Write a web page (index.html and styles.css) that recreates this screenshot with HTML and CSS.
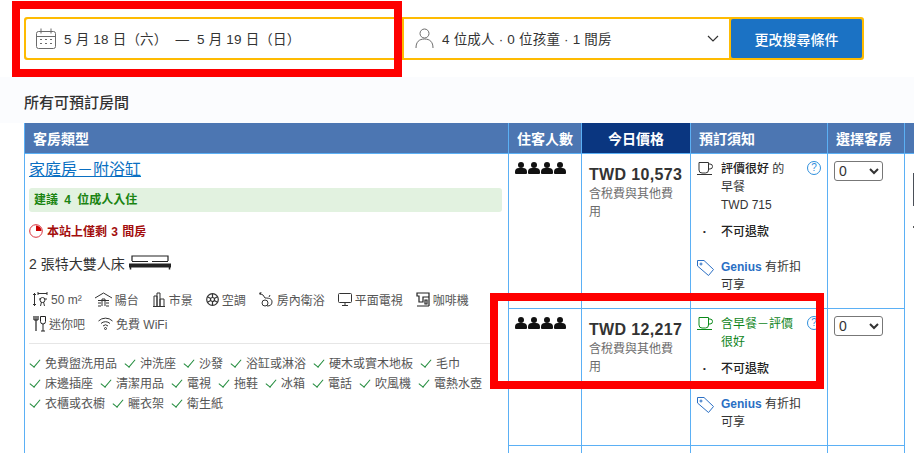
FILE: index.html
```html
<!DOCTYPE html>
<html lang="zh-Hant">
<head>
    <meta charset="UTF-8">
    <title>所有可預訂房間</title>
    <link rel="stylesheet" href="styles.css">
</head>
<body>
    <div class="search-bar">
        <div class="search-field date-field">
            <svg class="field-icon" width="20" height="21" viewBox="0 0 20 21" fill="none" stroke="#6b6b6b"><rect x="0.5" y="3.5" width="19" height="17" rx="2"/><path d="M0.5 8.5h19M5 0.5v5M15 0.5v5"/><path d="M4 11.5h2M9 11.5h2M14 11.5h2M4 15.5h2M9 15.5h2M14 15.5h2" stroke-dasharray="2 1"/></svg>
            <span>5 月 18 日（六）&nbsp;&nbsp;—&nbsp;&nbsp;5 月 19 日（日）</span>
        </div>
        <div class="search-field guest-field">
            <svg class="field-icon" width="19" height="21" viewBox="0 0 19 21" fill="none" stroke="#6b6b6b"><circle cx="9.5" cy="5.5" r="4.5"/><path d="M1 20c0-6 3-9 8.5-9s8.5 3 8.5 9"/></svg>
            <span>4 位成人 · 0 位孩童 · 1 間房</span>
            <svg class="chevron" width="12" height="7" viewBox="0 0 12 7" fill="none" stroke="#333" stroke-width="1.2"><path d="M1 1l5 5 5-5"/></svg>
        </div>
        <button class="search-btn">更改搜尋條件</button>
    </div>

    <div class="rooms">
        <h2 class="rooms-title">所有可預訂房間</h2>
        <table class="room-table">
            <colgroup>
                <col class="col-room"><col class="col-guests"><col class="col-price"><col class="col-policy"><col class="col-select"><col class="col-rest">
            </colgroup>
            <thead>
                <tr>
                    <th>客房類型</th>
                    <th>住客人數</th>
                    <th class="th-price">今日價格</th>
                    <th>預訂須知</th>
                    <th>選擇客房</th>
                    <th></th>
                </tr>
            </thead>
            <tbody>
                <tr class="row-first">
                    <td rowspan="3" class="room-cell">
                        <a class="room-name" href="#">家庭房－附浴缸</a>
                        <div class="suggest">建議 4 位成人入住</div>
                        <div class="scarce">
                            <svg width="14" height="14" viewBox="0 0 14 14"><circle cx="7" cy="7" r="6.3" fill="none" stroke="#d9333f" stroke-width="1"/><path d="M7 7V1.5A5.5 5.5 0 0 1 12.5 7z" fill="#c00"/></svg>
                            本站上僅剩 3 間房
                        </div>
                        <div class="bed">
                            2 張特大雙人床
                            <svg width="42" height="15" viewBox="0 0 42 15" fill="none" stroke="#222"><path d="M3 6V1h36v5" stroke-width="1.2"/><path d="M3 6.500h16M23 6.500h16" stroke-width="1.2"/><rect x="0.5" y="9" width="41" height="3" fill="#222"/><path d="M1.5 12v2.5M40.5 12v2.5" stroke-width="1.5"/></svg>
                        </div>
                        <div class="facilities">
                            <span class="facility"><svg width="15" height="15" viewBox="0 0 15 15" fill="none" stroke="#333"><path d="M1.5 1v13M0 2.5h3M0 12.5h3M5 1.5h9M5 0v3M14 0v3"/><circle cx="9.5" cy="8" r="2.5"/><path d="M7.5 14l1-4M11.5 14l-1-4M6 7h2M11 7h3"/></svg>50 m²</span>
                            <span class="facility"><svg width="17" height="15" viewBox="0 0 17 15" fill="none" stroke="#333"><path d="M0 6l8.5-5L17 6M3 8.5h11M3 11h3M11 11h3M3 14h3M11 14h3M7 14V7h3v7"/></svg>陽台</span>
                            <span class="facility"><svg width="14" height="15" viewBox="0 0 14 15" fill="none" stroke="#333"><path d="M1 14.5h12M2 14V4h3v10M5 14V1h3v13M8 14V7h4v7"/></svg>市景</span>
                            <span class="facility"><svg width="13" height="13" viewBox="0 0 13 13" fill="none" stroke="#333" stroke-width="1.2"><circle cx="6.5" cy="6.5" r="5.8"/><path d="M6.5 1v11M1.5 3.8l10 5.4M1.5 9.2l10-5.400"/><circle cx="6.5" cy="6.5" r="2" fill="#fff"/></svg>空調</span>
                            <span class="facility"><svg width="15" height="15" viewBox="0 0 15 15" fill="none" stroke="#333"><path d="M0 1l4 2M2 0l-1 3M4 3l2 3"/><circle cx="6" cy="11" r="3"/><path d="M6 6c5 0 7 1 7 4s-2 4-5 4M10 5l1-2"/></svg>房內衛浴</span>
                            <span class="facility"><svg width="14" height="13" viewBox="0 0 14 13" fill="none" stroke="#333"><rect x="0.5" y="0.5" width="13" height="9" rx="1"/><path d="M7 10v2.5M4 12.5h6"/></svg>平面電視</span>
                            <span class="facility"><svg width="14" height="15" viewBox="0 0 14 15" fill="none" stroke="#222"><path d="M1 1h12v4H7v5H3V4H1zM1 14h12M13 5v9M9 8h2v4H9z" stroke-width="1.2"/></svg>咖啡機</span>
                            <span class="facility"><svg width="13" height="16" viewBox="0 0 13 16" fill="none" stroke="#222"><path d="M1 0v4M3 0v15M5 0v4M1 4h4" stroke-width="1.2"/><path d="M7.5 0.5h5v5a2.5 2.5 0 0 1-5 0zM10 8v7M8 15h4"/></svg>迷你吧</span>
                            <span class="facility"><svg width="15" height="13" viewBox="0 0 15 13" fill="none" stroke="#333"><path d="M0.5 4a10 10 0 0 1 14 0M3 6.5a6.500 6.500 0 0 1 9 0M5 9a3.500 3.500 0 0 1 5 0"/><circle cx="7.5" cy="11.5" r="1"/></svg>免費 WiFi</span>
                        </div>
                        <ul class="amenities">
                            <li>免費盥洗用品</li><li>沖洗座</li><li>沙發</li><li>浴缸或淋浴</li><li>硬木或實木地板</li><li>毛巾</li>
                            <li>床邊插座</li><li>清潔用品</li><li>電視</li><li>拖鞋</li><li>冰箱</li><li>電話</li><li>吹風機</li><li>電熱水壺</li>
                            <li>衣櫃或衣櫥</li><li>曬衣架</li><li>衛生紙</li>
                        </ul>
                    </td>
                    <td class="guests-cell"><div class="people"><i></i><i></i><i></i><i></i></div></td>
                    <td class="price-cell">
                        <div class="price">TWD 10,573</div>
                        <div class="price-note">含稅費與其他費用</div>
                    </td>
                    <td class="policy-cell">
                        <div class="policy">
                            <svg class="policy-icon" width="16" height="13" viewBox="0 0 16 13" fill="none" stroke="#333"><path d="M2 0.5h9.5V8a3 3 0 0 1-3 3H5a3 3 0 0 1-3-3zM11.5 2H13a2 2 0 0 1 0 5h-1.5M0 12.5h15"/></svg>
                            <div class="policy-text"><b class="medium">評價很好</b> 的<br>早餐<br>TWD 715</div>
                            <span class="help">?</span>
                        </div>
                        <div class="policy no-refund"><span class="dot">•</span><div class="policy-text medium">不可退款</div></div>
                        <div class="policy genius">
                            <svg class="policy-icon" width="17" height="16" viewBox="0 0 17 16" fill="none" stroke="#2b6fc4"><path d="M0.5 0.5h6.5l9.5 9-5 6-11-9.5z"/><circle cx="4" cy="4" r="1"/></svg>
                            <div class="policy-text"><b class="genius-word">Genius</b> 有折扣<br>可享</div>
                        </div>
                    </td>
                    <td class="select-cell"><select class="room-select"><option>0</option></select></td>
                    <td class="rest-cell" rowspan="3"><div class="rest-box"></div><div class="rest-dot"></div></td>
                </tr>
                <tr class="row-second">
                    <td class="guests-cell"><div class="people"><i></i><i></i><i></i><i></i></div></td>
                    <td class="price-cell">
                        <div class="price">TWD 12,217</div>
                        <div class="price-note">含稅費與其他費用</div>
                    </td>
                    <td class="policy-cell">
                        <div class="policy">
                            <svg class="policy-icon" width="16" height="13" viewBox="0 0 16 13" fill="none" stroke="#0b8a1a"><path d="M2 0.5h9.5V8a3 3 0 0 1-3 3H5a3 3 0 0 1-3-3zM11.5 2H13a2 2 0 0 1 0 5h-1.5M0 12.5h15"/></svg>
                            <div class="policy-text green">含早餐－評價很好</div>
                            <span class="help">?</span>
                        </div>
                        <div class="policy no-refund"><span class="dot">•</span><div class="policy-text medium">不可退款</div></div>
                        <div class="policy genius">
                            <svg class="policy-icon" width="17" height="16" viewBox="0 0 17 16" fill="none" stroke="#2b6fc4"><path d="M0.5 0.5h6.5l9.5 9-5 6-11-9.5z"/><circle cx="4" cy="4" r="1"/></svg>
                            <div class="policy-text"><b class="genius-word">Genius</b> 有折扣<br>可享</div>
                        </div>
                    </td>
                    <td class="select-cell"><select class="room-select"><option>0</option></select></td>
                </tr>
                <tr class="row-third">
                    <td></td>
                    <td></td>
                    <td class="policy-cell"><div class="policy"><span class="help"></span></div></td>
                    <td class="select-cell"><select class="room-select"><option></option></select></td>
                </tr>
            </tbody>
        </table>
    </div>

    <!-- 紅框標註 -->
    <div class="mark mark-date"></div>
    <div class="mark mark-offer"></div>
</body>
</html>
```
FILE: styles.css
```css
html, body {
    height: 453px;
    overflow: hidden;
}

body {
    position: relative;
    margin: 0;
    background-color: #fff;
    color: #262626;
    font-family: "Liberation Sans", "Noto Sans CJK TC", sans-serif;
    font-size: 12px;
}

/* 搜尋列 */
.search-bar {
    display: flex;
    margin: 17px 0 0 24px;
    width: 840px;
    height: 43px;
    box-sizing: border-box;
    border: 2px solid #febb02;
    border-radius: 3px;
    background-color: #febb02;
    gap: 2px;
}

.search-field {
    display: flex;
    align-items: center;
    background-color: #fff;
    font-size: 13.5px;
    color: #333;
    letter-spacing: 0.2px;
}

.date-field {
    width: 376px;
    padding-left: 10px;
    box-sizing: border-box;
    border-radius: 2px 0 0 2px;
}

.guest-field {
    width: 325px;
    padding-left: 11px;
    box-sizing: border-box;
    position: relative;
}

.search-field span {
    margin-top: -2px;
}

.field-icon {
    margin-right: 8px;
    flex: none;
}

.chevron {
    margin-left: auto;
    margin-right: 10px;
}

.search-btn {
    flex: 1;
    border: none;
    border-radius: 2px;
    background-color: #1b72c4;
    color: #fff;
    font: inherit;
    font-size: 14px;
    font-weight: 500;
    padding: 0;
}

/* 房間列表 */
.rooms {
    margin-top: 17px;
    background: linear-gradient(#fbfcfe 46px, #fff 46px);
    padding-left: 24px;
}

.rooms-title {
    margin: 0;
    padding-top: 16px;
    height: 30px;
    font-size: 15px;
    line-height: 20px;
    font-weight: 500;
    color: #333;
}

.room-table {
    border-collapse: collapse;
    table-layout: fixed;
    width: 920px;
}

.col-room { width: 484px; }
.col-guests { width: 73px; }
.col-price { width: 109px; }
.col-policy { width: 137px; }
.col-select { width: 77px; }
.col-rest { width: 40px; }

.room-table th {
    height: 30px;
    padding: 0 8px;
    box-sizing: border-box;
    border: 1px solid #5bb0f5;
    border-top: none;
    background-color: #4c76b2;
    color: #fff;
    font-size: 14px;
    font-weight: 700;
    text-align: left;
}

.room-table .th-price {
    background-color: #0a3680;
    text-align: center;
}

.room-table td {
    box-sizing: border-box;
    border: 1px solid #5bb0f5;
    vertical-align: top;
    padding: 0;
}

.row-first td { height: 155px; }
.row-second td { height: 137px; }
.row-third td { height: 40px; }

/* 客房類型 */
.room-cell {
    padding: 6px 6px 0 4px !important;
}

.room-name {
    display: block;
    width: max-content;
    font-size: 16px;
    line-height: 19px;
    color: #0a6fc2;
    text-decoration: underline;
}

.suggest {
    margin-top: 9px;
    height: 24px;
    line-height: 24px;
    padding-left: 5px;
    border-radius: 3px;
    background-color: #e2f2e0;
    color: #1a8412;
    font-weight: 700;
    word-spacing: 3px;
}

.scarce {
    display: flex;
    align-items: center;
    gap: 4px;
    margin-top: 10px;
    height: 18px;
    color: #a30d0d;
    font-weight: 700;
    word-spacing: 1px;
}

.bed {
    display: flex;
    align-items: center;
    gap: 4px;
    margin-top: 13px;
    height: 20px;
    font-size: 14px;
    color: #333;
}

.facilities {
    display: flex;
    flex-wrap: wrap;
    row-gap: 8px;
    column-gap: 13px;
    margin-top: 19px;
    padding: 0 4px 11px 4px;
    border-bottom: 1px solid #e6e6e6;
    width: 461px;
    box-sizing: border-box;
    color: #555;
}

.facility {
    display: flex;
    align-items: center;
    gap: 3px;
    height: 16px;
}

.amenities {
    display: flex;
    flex-wrap: wrap;
    column-gap: 7px;
    row-gap: 4px;
    list-style: none;
    margin: 12px 0 0 0;
    padding: 0;
    width: 462px;
    color: #555;
    line-height: 16px;
}

.amenities li {
    display: flex;
    align-items: center;
}

.amenities li::before {
    content: "";
    box-sizing: border-box;
    width: 10px;
    height: 6px;
    margin: -3px 5px 0 1px;
    border-left: 1.2px solid #1f8a3a;
    border-bottom: 1.2px solid #1f8a3a;
    transform: rotate(-50deg);
}

/* 住客人數 */
.guests-cell {
    padding: 8px 0 0 6px !important;
}

.people {
    display: flex;
    gap: 1px;
}

.people i {
    display: block;
    position: relative;
    width: 12px;
    height: 13px;
}

.people i::before {
    content: "";
    position: absolute;
    left: 3px;
    top: 0;
    width: 6px;
    height: 6px;
    border-radius: 50%;
    background-color: #111;
}

.people i::after {
    content: "";
    position: absolute;
    left: 0;
    top: 6px;
    width: 12px;
    height: 6px;
    border-radius: 4px 4px 1px 1px;
    background-color: #111;
}

/* 價格 */
.price-cell {
    padding: 12px 7px 0 7px !important;
}

.price {
    font-size: 16px;
    line-height: 18px;
    font-weight: 700;
    letter-spacing: 0.35px;
    color: #333;
}

.price-note {
    margin-top: 1px;
    line-height: 18px;
    color: #6b6b6b;
}

/* 預訂須知 */
.policy-cell {
    padding: 6px 5px 0 3px !important;
}

.policy {
    display: flex;
    position: relative;
}

.policy-icon {
    flex: none;
    margin: 2px 8px 0 3px;
}

.policy-text {
    width: 84px;
    line-height: 18px;
    color: #333;
}

.policy-text b {
    font-weight: 400;
}

.medium,
.policy-text .medium {
    font-weight: 500;
    color: #222;
}

.policy-text.green {
    width: 78px;
    color: #10851c;
}

.help {
    position: absolute;
    right: 1px;
    top: 1px;
    width: 12px;
    height: 12px;
    line-height: 12px;
    border: 1px solid #2f8fdc;
    border-radius: 50%;
    color: #2f8fdc;
    font-size: 10px;
    text-align: center;
}

.no-refund {
    margin-top: 9px;
}

.dot {
    width: 27px;
    padding-left: 9px;
    box-sizing: border-box;
    font-size: 8px;
    line-height: 18px;
}

.genius {
    margin-top: 17px;
}

.genius .policy-icon {
    margin-right: 7px;
    margin-left: 3px;
}

.policy-text .genius-word {
    font-weight: 700;
    color: #2b6fc4;
}

/* 選擇客房 */
.select-cell {
    padding: 7px 0 0 6px !important;
}

.room-select {
    width: 49px;
    height: 20px;
    border: 1px solid #777;
    border-radius: 3px;
    background-color: #fff;
    font-family: inherit;
    font-size: 14px;
    color: #333;
}

.rest-cell {
    padding: 19px 0 0 8px !important;
}

.rest-box {
    width: 30px;
    height: 33px;
    background-color: #4a4f58;
}

.rest-dot {
    width: 2px;
    height: 2px;
    margin-top: 20px;
    background-color: #555;
}

/* 紅框標註 */
.mark {
    position: absolute;
    box-sizing: border-box;
    border: 8px solid #fe0000;
}

.mark-date {
    left: 12px;
    top: 1px;
    width: 390px;
    height: 76px;
}

.mark-offer {
    left: 490px;
    top: 293px;
    width: 334px;
    height: 96px;
}
```
